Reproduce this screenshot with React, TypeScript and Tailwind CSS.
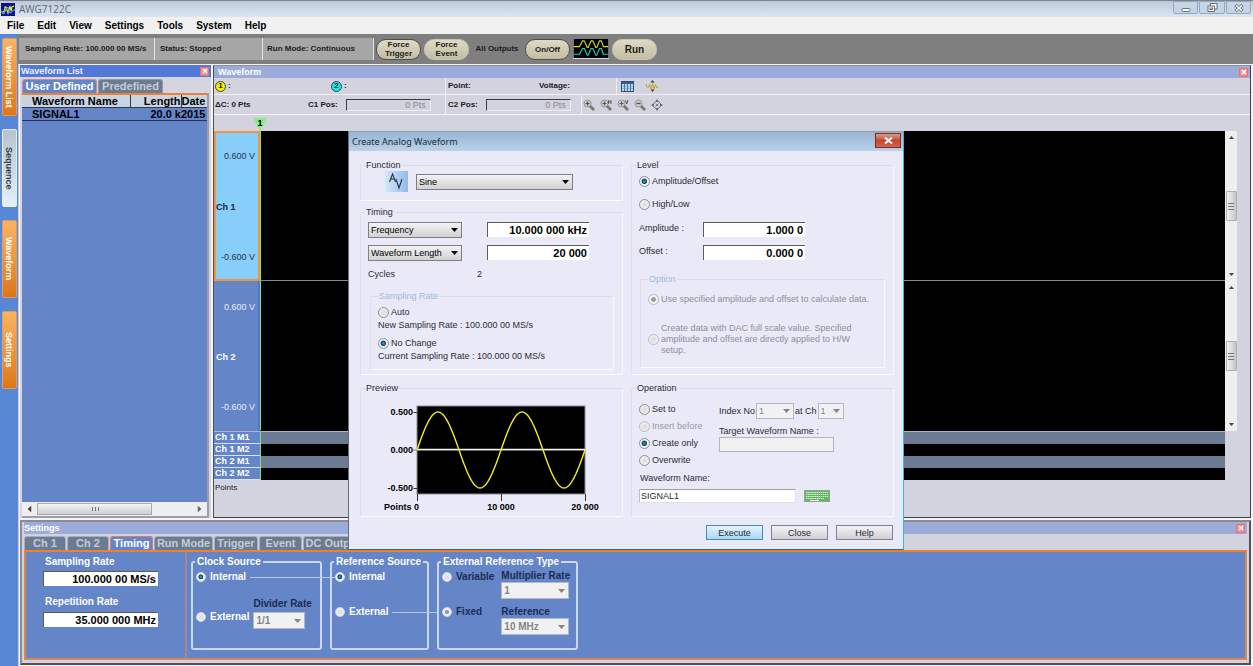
import type { ReactNode } from "react";
import clsx from "clsx";

/* ── Small shared controls ─────────────────────────────────────────────── */

const Caret = ({ className }: { className?: string }) => (
  <svg viewBox="0 0 7 4" className={clsx("pointer-events-none h-1 w-[7px]", className)} aria-hidden="true">
    <path d="M0 0H7L3.5 4Z" fill="currentColor" />
  </svg>
);

type SelectProps = { label: string; value: string; className?: string; disabled?: boolean };

const Select = ({ label, value, className, disabled }: SelectProps) => (
  <span className={clsx("relative inline-flex items-center", disabled ? "text-[#858585]" : "text-black", className)}>
    <select
      aria-label={label}
      disabled={disabled}
      className={clsx(
        "h-full w-full appearance-none border pl-0.5 leading-3",
        disabled ? "border-[#b4b8c0] bg-[#f1f1f3]" : "border-[#7e7e82] bg-linear-to-b from-[#f2f2f2] to-[#d2d2d4]"
      )}
    >
      <option>{value}</option>
    </select>
    <Caret className="absolute right-1" />
  </span>
);

type RadioProps = {
  name: string;
  children: ReactNode;
  checked?: boolean;
  disabled?: boolean;
  small?: boolean;
  className?: string;
};

const Radio = ({ name, children, checked, disabled, small, className }: RadioProps) => (
  <label className={clsx("flex items-center", small ? "gap-1" : "gap-0.5", className)}>
    <input
      type="radio"
      name={name}
      defaultChecked={checked}
      disabled={disabled}
      className={clsx(
        "shrink-0 appearance-none rounded-full border bg-[radial-gradient(circle,#dadada,#f8f8f8)]",
        small ? "size-[10px] border-[#d3dae6]" : "size-[11px] border-[#8c8f94]",
        disabled
          ? "border-[#b9bcc4] checked:bg-[radial-gradient(circle,#9c9c9c_30%,#f1f1f1_46%)]"
          : "checked:bg-[radial-gradient(circle_at_48%_48%,#39b5e8_0%,#0d3c60_34%,#f4f4f4_48%)]"
      )}
    />
    <span>{children}</span>
  </label>
);

const Field = ({ label, value, className }: { label: string; value: string; className?: string }) => (
  <input
    type="text"
    aria-label={label}
    defaultValue={value}
    className={clsx(
      "border-t border-l border-[#5c5c5c] bg-white pr-0.5 text-right text-[11px] leading-3 font-bold text-black",
      className
    )}
  />
);

const Group = ({ title, children, className, sub }: { title: string; children: ReactNode; className?: string; sub?: boolean }) => (
  <fieldset
    className={clsx("rounded-[2px] border border-t-[#dadbe9] border-r-[#f8f8fd] border-b-[#fbfbfe] border-l-[#dedfec]", className)}
  >
    <legend className={clsx("ml-1 h-3 px-px", sub && "text-[#a3bcdc]")}>{title}</legend>
    {children}
  </fieldset>
);

const CloseBox = ({ label }: { label: string }) => (
  <button
    type="button"
    aria-label={label}
    className="flex size-[9px] items-center justify-center border border-[#f07070] bg-[#f0908f] text-white"
  >
    <svg viewBox="0 0 6 6" className="size-[6px]" stroke="currentColor" strokeWidth="1.5">
      <path d="M1 1L5 5M5 1L1 5" />
    </svg>
  </button>
);

/* ── Title bar and menu ────────────────────────────────────────────────── */

const TitleBar = () => (
  <header className="flex h-[17px] items-start justify-between border-t border-[#7d828a] bg-linear-to-b from-[#bccadb] to-[#dbe6f2]">
    <div className="flex items-center gap-1 pl-px">
      <svg viewBox="0 0 14 13" className="mt-px h-[13px] w-[14px]" aria-hidden="true">
        <rect width="14" height="13" fill="#10108c" />
        <path d="M0 9H2Q4 9 4 4Q5 3 6 7L7 10L9 3L10 8L11 4L13 3" fill="none" stroke="#f2e83a" strokeWidth="1.2" />
        <path d="M1 10L3 11L5 6L7 4L8 9L10 10L12 7H14" fill="none" stroke="#3cc6ea" strokeWidth="1" />
      </svg>
      <h1 className="font-['Open_Sans','Noto_Sans',sans-serif] text-[10px] leading-4 text-[#5d6673]">AWG7122C</h1>
    </div>
    <div className="flex gap-px pr-0.5 text-[#5b6470]">
      <button type="button" aria-label="Minimize" className="flex h-[13px] w-[25px] items-center justify-center rounded-b-[2px] border border-[#93a7be] bg-[#c6d5e6]">
        <svg viewBox="0 0 10 8" className="h-2 w-2.5">
          <rect x="1" y="4.5" width="8" height="3" rx="1" fill="#fff" stroke="currentColor" strokeWidth=".9" />
        </svg>
      </button>
      <button type="button" aria-label="Restore" className="flex h-[13px] w-[26px] items-center justify-center rounded-b-[2px] border border-[#93a7be] bg-[#c6d5e6]">
        <svg viewBox="0 0 11 9" className="h-[9px] w-[11px]" fill="#fff" stroke="currentColor" strokeWidth=".9">
          <rect x="3.5" y=".5" width="6.5" height="5.5" />
          <rect x="1" y="3" width="6.5" height="5.5" />
          <rect x="3" y="5" width="2.5" height="1.5" />
        </svg>
      </button>
      <button type="button" aria-label="Close" className="flex h-[13px] w-[25px] items-center justify-center rounded-b-[2px] border border-[#93a7be] bg-[#c6d5e6]">
        <svg viewBox="0 0 10 8" className="h-2 w-2.5">
          <path d="M1.500 1L8.500 7M8.500 1L1.500 7" stroke="currentColor" strokeWidth="3" />
          <path d="M2 1.400L8 6.600M8 1.400L2 6.600" stroke="#fff" strokeWidth="1.4" />
        </svg>
      </button>
    </div>
  </header>
);

const MENU = ["File", "Edit", "View", "Settings", "Tools", "System", "Help"];

const MenuBar = () => (
  <nav className="flex h-[17px] items-center gap-[13px] bg-[#f0f0f0] pl-[7px] text-[10px] font-bold">
    {MENU.map((item) => (
      <button key={item} type="button" className="leading-4">
        {item}
      </button>
    ))}
  </nav>
);

/* ── Side rail ─────────────────────────────────────────────────────────── */

const RAIL = [
  { name: "Waveform List", open: true },
  { name: "Sequence", open: false },
  { name: "Waveform", open: true },
  { name: "Settings", open: true },
];

const SideRail = () => (
  <nav className="flex w-[18px] shrink-0 flex-col items-center gap-[13px] bg-[#5887d6] pt-1">
    {RAIL.map(({ name, open }) => (
      <button
        key={name}
        type="button"
        className={clsx(
          "flex h-[78px] w-[15px] items-center justify-center rounded-[2px] border text-[9px] leading-3 font-bold [writing-mode:vertical-rl]",
          open
            ? "border-[#e39a62] bg-linear-to-b from-[#f9b45f] to-[#dc7716] text-white"
            : "border-[#e6eefa] bg-linear-to-b from-[#b8c2cc] to-[#e4f0fd] text-[#3a3f48]"
        )}
      >
        {name}
      </button>
    ))}
  </nav>
);

/* ── Toolbar ───────────────────────────────────────────────────────────── */

const PILL =
  "flex h-[21px] w-[45px] items-center justify-center rounded-[10px] border bg-linear-to-b from-[#dedac4] to-[#c2bda2] text-center leading-[9px]";

const Toolbar = () => (
  <div className="flex h-[30px] shrink-0 items-center bg-[#7f7f7f] pl-px text-[8px] font-bold text-[#1c1c1c]">
    <div className="flex h-[22px] bg-[#a6a6a6] leading-[22px] whitespace-nowrap">
      <span className="w-[136px] border-r border-[#e2e2e2] pl-[6px]">Sampling Rate: 100.000 00 MS/s</span>
      <span className="w-[108px] border-r border-[#e2e2e2] pl-[5px]">Status: Stopped</span>
      <span className="w-[111px] border-r border-[#e2e2e2] pl-1">Run Mode: Continuous</span>
    </div>
    <div className="flex items-center gap-[3px] pl-0.5">
      <button type="button" className={clsx(PILL, "border-[#4f4f48]")}>
        Force
        <br />
        Trigger
      </button>
      <button type="button" className={clsx(PILL, "border-[#c9c5b4]")}>
        Force
        <br />
        Event
      </button>
      <span className="w-[50px] text-center">All Outputs</span>
      <button type="button" className={clsx(PILL, "border-[#4f4f48]")}>
        On/Off
      </button>
      <svg viewBox="0 0 36 20" className="h-5 w-9 border-b border-[#d8d8d8]" aria-hidden="true">
        <rect width="36" height="20" fill="#000" />
        <g fill="none" strokeWidth="1.2" strokeLinejoin="round">
          <path d="M0 8H6L9 2H11L14 9H15L18 2H20L23 9H24L27 2H29L31 8H36" stroke="#dada20" />
          <path d="M0 16H6L9 10H11L14 17H15L18 10H20L23 17H24L27 10H29L31 16H36" stroke="#2ac8d2" />
        </g>
      </svg>
      <button type="button" className={clsx(PILL, "border-[#c9c5b4] text-[10px]")}>
        Run
      </button>
    </div>
  </div>
);

/* ── Waveform list panel ───────────────────────────────────────────────── */

const HScroll = () => (
  <div className="flex h-[14px] items-center bg-[#eeeef0]">
    <span className="flex w-[15px] justify-center text-[#444]">
      <Caret className="rotate-90" />
    </span>
    <div className="flex h-3 w-[115px] items-center justify-center gap-px border border-[#a9a9ad] bg-linear-to-b from-[#f4f4f4] to-[#cfcfd3]">
      {[0, 1, 2].map((i) => (
        <i key={i} className="h-1 w-0.5 border-r border-[#777]" />
      ))}
    </div>
    <span className="flex flex-1 justify-end pr-1 text-[#666]">
      <Caret className="-rotate-90" />
    </span>
  </div>
);

const WaveformList = () => (
  <section className="flex w-[191px] shrink-0 flex-col bg-[#d5d5e1]">
    <div className="flex h-3 items-center justify-between bg-[#5379d8] pr-0.5 pl-px text-[9px] leading-3 font-bold text-[#eaf0ff]">
      <h2>Waveform List</h2>
      <CloseBox label="Close waveform list" />
    </div>
    <div className="flex gap-px pt-0.5 pl-0.5 text-[11px] leading-[13px] font-bold">
      <button type="button" className="w-[75px] rounded-t-[3px] border border-b-0 border-[#d98a80] bg-[#6485c8] text-white">
        User Defined
      </button>
      <button type="button" className="w-[65px] rounded-t-[3px] border border-b-0 border-[#8e9bb0] bg-[#6b7b92] text-[#c5ccd6]">
        Predefined
      </button>
    </div>
    <div className="mr-0.5 ml-0.5 flex flex-1 flex-col border-r-2 border-b-2 border-[#9d9dab] bg-[#6485c8]">
      <table className="w-full table-fixed border-collapse border-t-2 border-t-[#f08030] text-[11px] leading-3 font-bold whitespace-nowrap">
        <thead>
          <tr className="bg-[#c8d4e2]">
            <th className="w-[108px] border-r border-b border-[#303850] p-0 pl-[10px] text-left">Waveform Name</th>
            <th className="w-[51px] border-r border-b border-[#303850] p-0 text-right">Length</th>
            <th className="border-b border-[#303850] p-0 text-left">Date</th>
          </tr>
        </thead>
        <tbody>
          <tr>
            <td className="border-b border-[#26345c] p-0 pl-[10px]">SIGNAL1</td>
            <td className="border-b border-[#26345c] p-0 text-right">20.0 k</td>
            <td className="border-b border-[#26345c] p-0">2015</td>
          </tr>
        </tbody>
      </table>
      <div className="mt-auto">
        <HScroll />
      </div>
    </div>
  </section>
);

/* ── Waveform panel ────────────────────────────────────────────────────── */

const Magnifier = ({ label, mark }: { label: string; mark: ReactNode }) => (
  <button type="button" aria-label={label}>
    <svg viewBox="0 0 12 12" className="size-3" fill="none">
      <circle cx="4.500" cy="4.500" r="3.500" stroke="#96969a" fill="#c9c9cc" />
      <path d="M7 7L11 11" stroke="#77776c" strokeWidth="2.600" />
      <g stroke="#505050" strokeWidth="1.200">{mark}</g>
    </svg>
  </button>
);

const PLUS = "M4.500 2.500V6.500M2.500 4.500H6.500";

const CursorBadge = ({ n, tone }: { n: number; tone: string }) => (
  <span className="flex items-center gap-0.5">
    <span className={clsx("flex size-[11px] items-center justify-center rounded-full border border-[#444] text-[8px] leading-none", tone)}>
      {n}
    </span>
    :
  </span>
);

const POS_INPUT =
  "h-[12px] w-[85px] border border-t-[#3c3c3c] border-r-[#ececf4] border-b-[#ececf4] border-l-[#3c3c3c] bg-[#d3d3df] pr-1 text-right text-[9px] leading-[10px] font-normal text-[#8a8a92]";

const CursorBar = () => (
  <div className="text-[8px] leading-3 font-bold text-[#1a1a1a]">
    <div className="flex h-[17px] items-stretch border-b border-[#f2f2f8]">
      <div className="flex w-[116px] items-center pl-px">
        <CursorBadge n={1} tone="bg-[#f6f000]" />
      </div>
      <div className="flex w-[116px] items-center border-r border-[#eeeef6] pl-px">
        <CursorBadge n={2} tone="bg-[#10e8ec]" />
      </div>
      <span className="flex w-[91px] items-center pl-0.5">Point:</span>
      <span className="flex w-[80px] items-center border-r border-[#eeeef6] pl-0.5">Voltage:</span>
      <div className="flex items-center gap-3 pl-1">
        <button type="button" aria-label="Show table">
          <svg viewBox="0 0 13 11" className="h-[11px] w-[13px]">
            <rect x=".5" y=".5" width="12" height="10" fill="#b8d8f4" stroke="#30507c" />
            <rect x="1" y="1" width="11" height="2" fill="#3c5c94" />
            <path d="M3.500 3V10M6.500 3V10M9.500 3V10" stroke="#30507c" strokeWidth=".8" />
            <path d="M1 5.500H12M1 7.500H12" stroke="#7898c0" strokeWidth=".6" />
          </svg>
        </button>
        <button type="button" aria-label="Vertical fit">
          <svg viewBox="0 0 13 12" className="h-3 w-[13px]" fill="none">
            <path d="M6.500 0L8.500 2.500H4.500ZM6.500 12L8.500 9.500H4.500Z" fill="#3a3a3a" />
            <path d="M.5 4V7L2 8L3.500 4.500L5 9L6.500 3.500L8 9L9.500 4.500L11 8L12.500 7" stroke="#b8ac20" />
          </svg>
        </button>
      </div>
    </div>
    <div className="flex h-[20px] items-stretch border-b border-[#f2f2f8]">
      <span className="flex w-[94px] items-center pl-px">ΔC: 0 Pts</span>
      <label className="flex w-[138px] items-center gap-2 border-r border-[#eeeef6]">
        C1 Pos:
        <input readOnly value="0 Pts" className={POS_INPUT} />
      </label>
      <label className="flex w-[136px] items-center gap-2 border-r border-[#eeeef6] pl-0.5">
        C2 Pos:
        <input readOnly value="0 Pts" className={POS_INPUT} />
      </label>
      <div className="flex items-center gap-[5px] pl-px">
        <Magnifier label="Zoom in" mark={<path d={PLUS} />} />
        <Magnifier label="Zoom in horizontally" mark={<path d={`${PLUS}M8.500 1V5M11 1V5M8.500 3H11`} strokeWidth=".9" />} />
        <Magnifier label="Zoom in vertically" mark={<path d={`${PLUS}M8.500 1L9.700 5L11 1`} strokeWidth=".9" />} />
        <Magnifier label="Zoom out" mark={<path d="M2.500 4.500H6.500" />} />
        <button type="button" aria-label="Fit to window">
          <svg viewBox="0 0 12 12" className="size-3" fill="#6a6a6a">
            <path d="M6 0L8 3H4ZM6 12L8 9H4ZM0 6L3 4V8ZM12 6L9 4V8Z" />
            <circle cx="6" cy="6" r="1" />
            <path d="M3 3L4.500 4.500M9 3L7.500 4.500M3 9L4.500 7.500M9 9L7.500 7.500" stroke="#6a6a6a" />
          </svg>
        </button>
      </div>
    </div>
  </div>
);

const VScroll = () => (
  <div className="flex w-3 shrink-0 flex-col items-center justify-between bg-[#efeff0] py-[5px] text-[#444]">
    <svg viewBox="0 0 5 3" className="h-[3px] w-[5px]">
      <path d="M0 3H5L2.500 0Z" fill="currentColor" />
    </svg>
    <div className="flex h-[30px] w-[11px] flex-col items-center justify-center gap-px rounded-[1px] border border-[#b0b0b4] bg-linear-to-r from-[#f2f2f2] to-[#c6c6ca]">
      {[0, 1, 2].map((i) => (
        <i key={i} className="h-0.5 w-1.5 border-b border-[#777]" />
      ))}
    </div>
    <svg viewBox="0 0 5 3" className="h-[3px] w-[5px]">
      <path d="M0 0H5L2.500 3Z" fill="currentColor" />
    </svg>
  </div>
);

const Channel = ({ name, active }: { name: string; active?: boolean }) => (
  <div className="flex min-h-[120px] flex-1">
    <div
      className={clsx(
        "flex w-[46px] shrink-0 flex-col justify-between text-[9px] leading-3",
        active
          ? "border-2 border-[#f09440] bg-[#87cefa] pt-[17px] pb-[16px] text-[#26344a]"
          : "border-r-2 border-r-[#5478c4] bg-[#6485c8] pt-5 pb-[18px] text-[#e4ecfa]"
      )}
    >
      <span className="pr-[3px] text-right">0.600 V</span>
      <span className={clsx("font-bold", active ? "text-[#14283c]" : "pl-0.5 text-white")}>{name}</span>
      <span className="pr-[3px] text-right">-0.600 V</span>
    </div>
    <div className={clsx("flex-1 border-b border-l border-l-[#7fe07f] bg-black", active ? "border-b-[#8a8a8a]" : "border-b-black")} />
    <VScroll />
  </div>
);

const MARKERS = ["Ch 1 M1", "Ch 1 M2", "Ch 2 M1", "Ch 2 M2"];

const WaveformPanel = () => (
  <section className="flex flex-1 flex-col border border-t-[#909090] border-r-[#404048] border-b-[#404048] border-l-[#50504c] bg-[#d3d3df]">
    <div className="flex h-3 items-center justify-between bg-[#9bacdb] pr-0.5 pl-1 text-[9px] leading-3 font-bold text-white">
      <h2>Waveform</h2>
      <CloseBox label="Close waveform" />
    </div>
    <CursorBar />
    <div className="flex h-4 shrink-0 items-end pl-[38px]">
      <svg viewBox="0 0 15 13" className="h-[13px] w-[15px]">
        <path d="M1 0H15L8 13Z" fill="#8aec8a" />
        <text x="8" y="8" textAnchor="middle" fontSize="9" fontWeight="bold">
          1
        </text>
      </svg>
    </div>
    <div className="flex flex-1 flex-col pr-[13px]">
      <Channel name="Ch 1" active />
      <Channel name="Ch 2" />
      <div className="mr-3 border-t border-[#a8b4cc]">
        {MARKERS.map((m, i) => (
          <div key={m} className="flex h-[12px]">
            <span className="w-[46px] shrink-0 border-b border-[#dbe4f6] bg-[#6485c8] pl-px text-[9px] leading-[11px] font-bold whitespace-nowrap text-white">
              {m}
            </span>
            <div className={clsx("flex-1 border-l border-l-[#7fe07f]", i % 2 ? "bg-black" : "bg-[#6c7b92]")} />
          </div>
        ))}
      </div>
    </div>
    <p className="h-[37px] pt-0.5 pl-px text-[8px] leading-3 text-[#222]">Points</p>
  </section>
);

/* ── Settings panel ────────────────────────────────────────────────────── */

const Box = ({ title, children, className }: { title: string; children: ReactNode; className?: string }) => (
  <fieldset className={clsx("h-[94px] rounded-[3px] border-2 border-[#c9d7f1] pb-1", className)}>
    <legend className="ml-0.5 h-3 px-0.5 whitespace-nowrap text-white">{title}</legend>
    {children}
  </fieldset>
);

const SETTING_TABS = [
  { name: "Ch 1", w: "w-[42px]" },
  { name: "Ch 2", w: "w-[42px]" },
  { name: "Timing", w: "w-[43px]" },
  { name: "Run Mode", w: "w-[59px]" },
  { name: "Trigger", w: "w-[44px]" },
  { name: "Event", w: "w-[43px]" },
  { name: "DC Outputs", w: "w-[66px]" },
];

const SettingsPanel = () => (
  <section className="flex shrink-0 flex-col border-2 border-t-[#8b8b93] border-r-[#505058] border-b-[#505058] border-l-[#8b8b93] bg-[#d3d3df] px-0.5 pb-[3px]">
    <div className="flex h-3 items-center justify-between bg-[#9bacdb] pr-0.5 text-[9px] leading-3 font-bold text-white">
      <h2>Settings</h2>
      <CloseBox label="Close settings" />
    </div>
    <div className="flex gap-px pt-0.5 text-[11px] leading-[13px] font-bold">
      {SETTING_TABS.map(({ name, w }) => (
        <button
          key={name}
          type="button"
          className={clsx(
            "shrink-0 rounded-t-[3px] border border-b-0 whitespace-nowrap",
            w,
            name === "Timing" ? "border-[#e07868] bg-[#6485c8] text-white" : "border-[#a6afc0] bg-[#6b7b92] text-[#c5ccd6]"
          )}
        >
          {name}
        </button>
      ))}
    </div>
    <div className="flex h-[110px] border-2 border-[#d98850] border-t-[#f08030] bg-[#6485c8] text-[10px] leading-3 font-bold text-white">
      <div className="flex w-[161px] shrink-0 flex-col border-r-2 border-[#a8848c] pt-[4px] pl-[17px]">
        <span className="pl-0.5">Sampling Rate</span>
        <Field label="Sampling Rate" value="100.000 00 MS/s" className="mt-[3px] h-[15px] w-[115px]" />
        <span className="mt-[10px] pl-0.5">Repetition Rate</span>
        <Field label="Repetition Rate" value="35.000 000 MHz" className="mt-1 h-[15px] w-[115px]" />
      </div>
      <div className="flex gap-2 pt-[4px] pl-1">
        <Box title="Clock Source" className="w-[131px]">
          <div className="-mr-[22px] flex items-center gap-1 pt-[3px] pl-[3px]">
            <Radio small name="clock" checked>
              Internal
            </Radio>
            <i className="h-px flex-1 bg-[#b4c6ea]" />
          </div>
          <div className="flex items-end gap-1 pt-[15px] pl-[3px]">
            <Radio small name="clock" className="pb-1.5">
              External
            </Radio>
            <div className="flex flex-col gap-0.5">
              <span className="text-[#1c2c50]">Divider Rate</span>
              <Select disabled label="Divider Rate" value="1/1" className="h-[17px] w-[52px]" />
            </div>
          </div>
        </Box>
        <Box title="Reference Source" className="w-[99px]">
          <div className="pt-[3px] pl-[3px]">
            <Radio small name="reference" checked>
              Internal
            </Radio>
          </div>
          <div className="-mr-3 flex items-center gap-1 pt-[23px] pl-[3px]">
            <Radio small name="reference">
              External
            </Radio>
            <i className="h-px flex-1 bg-[#b4c6ea]" />
          </div>
        </Box>
        <Box title="External Reference Type" className="w-[141px]">
          <div className="flex gap-[7px] pl-[3px] text-[#1c2c50]">
            <div className="flex flex-col gap-[23px] pt-[3px]">
              <Radio small name="external-type">
                Variable
              </Radio>
              <Radio small name="external-type" checked disabled>
                Fixed
              </Radio>
            </div>
            <div className="flex flex-col pt-0.5 whitespace-nowrap">
              <span>Multiplier Rate</span>
              <Select disabled label="Multiplier Rate" value="1" className="h-[17px] w-[68px]" />
              <span className="mt-[7px]">Reference</span>
              <Select disabled label="Reference" value="10 MHz" className="h-[17px] w-[68px]" />
            </div>
          </div>
        </Box>
      </div>
    </div>
  </section>
);

/* ── Create Analog Waveform dialog ─────────────────────────────────────── */

// two full periods over the 168px wide preview
const SINE = Array.from({ length: 169 }, (_, i) => {
  const y = 48 - Math.sin((i / 168) * Math.PI * 4) * 38;
  return `${i + 37},${y.toFixed(1)}`;
}).join(" ");

const Preview = () => (
  <svg viewBox="0 0 230 114" className="h-[114px] w-[230px]" fontSize="9" fontWeight="bold" role="img" aria-label="Sine preview">
    <rect x="37" y="4" width="168" height="88" fill="#000" stroke="#8c8c94" />
    <path d="M33 48H205" stroke="#777" />
    <path d="M37 47.500H205" stroke="#f4f4f4" strokeWidth="1.500" />
    <polyline points={SINE} fill="none" stroke="#f2f018" strokeWidth="1.400" />
    <path d="M33.500 10.500H37M33.500 86.500H37M37.500 92V99M121.500 92V99M205.500 92V99" stroke="#333" />
    <g textAnchor="end">
      <text x="33" y="13">0.500</text>
      <text x="33" y="51">0.000</text>
      <text x="33" y="89">-0.500</text>
      <text x="39" y="108">Points 0</text>
    </g>
    <g textAnchor="middle">
      <text x="121" y="108">10 000</text>
      <text x="205" y="108">20 000</text>
    </g>
  </svg>
);

const DIALOG_BUTTON = "h-[15px] w-[57px] border leading-3";

const AnalogDialog = () => (
  <div
    role="dialog"
    aria-label="Create Analog Waveform"
    className="absolute top-[131px] left-[348px] w-[556px] border border-t-[#8e9db0] border-r-[#38b8d4] border-b-[#2a6c88] border-l-[#666c78] bg-[#e9e9f7] text-[9px] leading-3 text-[#2c2c34]"
  >
    <div className="flex h-[19px] items-start justify-between bg-linear-to-b from-[#98b4d2] to-[#bad2ea] pr-0.5 pl-[3px]">
      <h2 className="font-['Noto_Sans','Open_Sans',sans-serif] leading-[19px] text-[#1c2838]">Create Analog Waveform</h2>
      <button
        type="button"
        aria-label="Close dialog"
        className="mt-px flex h-[15px] w-[26px] items-center justify-center border border-[#7c2c28] bg-linear-to-b from-[#dc9a8e] via-[#c4452e] via-50% to-[#d06850] text-white"
      >
        <svg viewBox="0 0 9 7" className="h-[7px] w-[9px]" stroke="currentColor" strokeWidth="2">
          <path d="M1 .500L8 6.500M8 .500L1 6.500" />
        </svg>
      </button>
    </div>

    <div className="grid grid-cols-[263px_263px] gap-x-2 gap-y-[7px] pt-2 pl-[11px]">
      <div className="flex flex-col gap-[5px]">
        <Group title="Function" className="h-[42px]">
          <div className="flex items-center gap-2 pl-6">
            <svg viewBox="0 0 23 21" className="h-[21px] w-[23px]" aria-hidden="true">
              <defs>
                <linearGradient id="fn">
                  <stop offset="0" stopColor="#d4e8fc" />
                  <stop offset="1" stopColor="#94b8ec" />
                </linearGradient>
              </defs>
              <rect width="23" height="21" fill="url(#fn)" />
              <path d="M4.500 11L7.500 3L10.500 11M5.500 8H9.500M11 8L14 17L17 8" fill="none" stroke="#26303c" strokeWidth="1.100" />
            </svg>
            <Select label="Function" value="Sine" className="h-4 w-[157px]" />
          </div>
        </Group>
        <Group title="Timing" className="flex-1">
          <div className="flex flex-col gap-[7px] pt-1 pl-[7px]">
            <div className="flex gap-[25px]">
              <Select label="Timing mode" value="Frequency" className="h-4 w-[94px]" />
              <Field label="Frequency" value="10.000 000 kHz" className="h-[15px] w-[102px]" />
            </div>
            <div className="flex gap-[25px]">
              <Select label="Length mode" value="Waveform Length" className="h-4 w-[94px]" />
              <Field label="Waveform Length" value="20 000" className="h-[15px] w-[102px]" />
            </div>
            <div className="flex">
              <span className="w-[109px]">Cycles</span>
              <span>2</span>
            </div>
          </div>
          <Group title="Sampling Rate" sub className="mt-[10px] mr-2 ml-[9px] pb-[7px] pl-[3px]">
            <div className="flex flex-col gap-px pt-1 pl-1">
              <Radio name="sampling">Auto</Radio>
              <span>New Sampling Rate : 100.000 00 MS/s</span>
              <Radio name="sampling" checked className="mt-[5px]">
                No Change
              </Radio>
              <span>Current Sampling Rate : 100.000 00 MS/s</span>
            </div>
          </Group>
        </Group>
      </div>

      <Group title="Level">
        <div className="pt-1 pl-[7px]">
          <div className="flex flex-col gap-[11px]">
            <Radio name="level" checked>
              Amplitude/Offset
            </Radio>
            <Radio name="level">High/Low</Radio>
          </div>
          <label className="mt-3 flex">
            <span className="w-[64px]">Amplitude :</span>
            <Field label="Amplitude" value="1.000 0" className="h-[15px] w-[102px]" />
          </label>
          <label className="mt-2 flex">
            <span className="w-[64px]">Offset :</span>
            <Field label="Offset" value="0.000 0" className="h-[15px] w-[102px]" />
          </label>
        </div>
        <Group title="Option" sub className="mx-2 mt-[13px] mb-[6px] pb-[11px] pl-[3px]">
          <div className="flex flex-col gap-[18px] pt-[9px] pl-1 leading-[11px] whitespace-nowrap text-[#8f8f98]">
            <Radio name="option" checked disabled>
              Use specified amplitude and offset to calculate data.
            </Radio>
            <Radio name="option" disabled>
              Create data with DAC full scale value. Specified
              <br />
              amplitude and offset are directly applied to H/W
              <br />
              setup.
            </Radio>
          </div>
        </Group>
      </Group>

      <Group title="Preview">
        <div className="pt-2 pl-[19px]">
          <Preview />
        </div>
      </Group>

      <Group title="Operation">
        <div className="flex pt-[9px] pl-[7px]">
          <div className="flex w-[80px] flex-col gap-[5px]">
            <Radio name="operation">Set to</Radio>
            <Radio name="operation" disabled className="text-[#9a9aa2]">
              Insert before
            </Radio>
            <Radio name="operation" checked>
              Create only
            </Radio>
            <Radio name="operation">Overwrite</Radio>
          </div>
          <div className="flex flex-col">
            <div className="flex h-4 items-center gap-px whitespace-nowrap">
              Index No
              <Select disabled label="Index No" value="1" className="h-4 w-[38px]" />
              at Ch
              <Select disabled label="Channel" value="1" className="h-4 w-[26px]" />
            </div>
            <label className="flex flex-col pt-1.5">
              Target Waveform Name :
              <input disabled className="h-[15px] w-[115px] border border-[#b4b4bc] bg-[#f0f0f0]" />
            </label>
          </div>
        </div>
        <label className="block pt-1.5 pl-2" htmlFor="waveform-name">
          Waveform Name:
        </label>
        <div className="flex items-center gap-2 pt-[5px] pl-[7px]">
          <input
            id="waveform-name"
            defaultValue="SIGNAL1"
            className="h-[14px] w-[157px] border border-t-[#9c9ca4] border-r-[#e0e0e8] border-b-[#e0e0e8] border-l-[#c0c0c8] bg-white pl-px"
          />
          <button type="button" aria-label="On-screen keyboard">
            <svg viewBox="0 0 26 12" className="block h-3 w-[26px]">
              <rect x=".5" y=".5" width="25" height="11" fill="#64b464" stroke="#88a894" />
              <path
                d="M2 2.500H24M2 4.500H24M2 6.500H24M2 8.500H20"
                stroke="#dcf4dc"
                strokeWidth="1.200"
                strokeDasharray="1.500 .6"
              />
              <path d="M6 10.500H15" stroke="#f4fcf4" />
            </svg>
          </button>
        </div>
      </Group>
    </div>

    <div className="flex justify-end gap-2 pt-2 pr-[10px] pb-[9px]">
      <button type="button" className={clsx(DIALOG_BUTTON, "border-[#4c88b4] bg-linear-to-b from-[#e4f4fc] to-[#a8d8f4]")}>
        Execute
      </button>
      <button type="button" className={clsx(DIALOG_BUTTON, "border-[#808088] bg-linear-to-b from-[#f4f4f4] to-[#d0d0d4]")}>
        Close
      </button>
      <button type="button" className={clsx(DIALOG_BUTTON, "border-[#808088] bg-linear-to-b from-[#f4f4f4] to-[#d0d0d4]")}>
        Help
      </button>
    </div>
  </div>
);

export default function App() {
  return (
    <div className="relative flex min-h-screen flex-col bg-[#f3f3f6] font-['Liberation_Sans',Arial,sans-serif] text-black">
      <TitleBar />
      <MenuBar />
      <div className="flex flex-1">
        <SideRail />
        <div className="flex min-w-0 flex-1 flex-col">
          <Toolbar />
          <main className="flex flex-1 flex-col gap-0.5 border-l border-[#c8ccd8] pt-px pr-0.5 pb-px pl-px">
            <div className="flex flex-1 gap-0.5">
              <WaveformList />
              <WaveformPanel />
            </div>
            <SettingsPanel />
          </main>
        </div>
      </div>
      <AnalogDialog />
    </div>
  );
}
